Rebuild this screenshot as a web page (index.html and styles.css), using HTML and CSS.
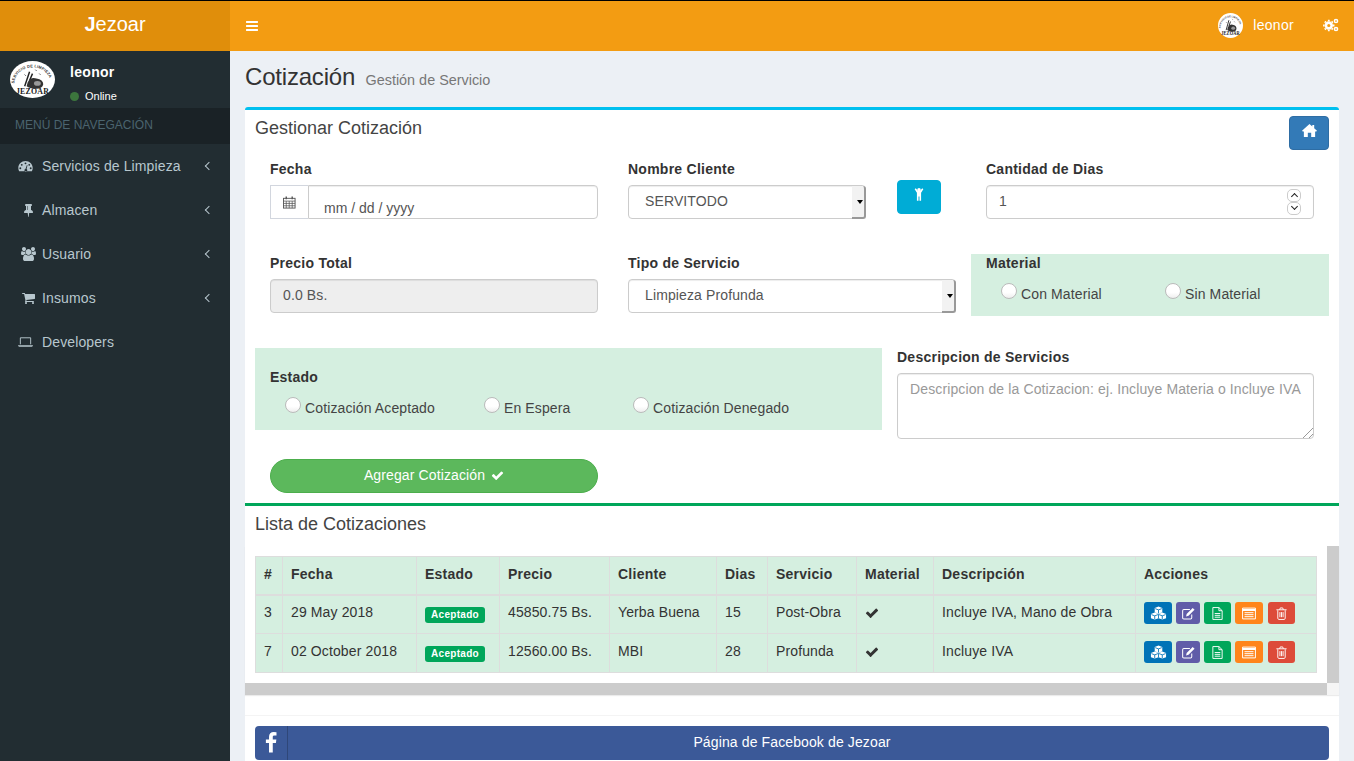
FILE: index.html
```html
<!DOCTYPE html>
<html lang="es">
<head>
  <meta charset="UTF-8" />
  <meta name="viewport" content="width=device-width, initial-scale=1.0" />
  <title>Cotización</title>
  <link rel="stylesheet" href="styles.css">
</head>
<body>
  <svg class="defs" width="0" height="0">
    <symbol id="logo-art" viewBox="0 0 92 76" preserveAspectRatio="none">
      <ellipse cx="46" cy="38" rx="46" ry="38" fill="#fff"/>
      <path d="M40 22 L30 52 M46 26 L40 40" stroke="#222" stroke-width="3" fill="none"/>
      <path d="M36 44 q6-12 18-8 q14 2 14 12 q-2 10-16 9 q-12 0-18-5z" fill="#333"/>
      <ellipse cx="56" cy="46" rx="7" ry="5" fill="#999"/>
      <path d="M30 28l2 2M52 18l2 2M60 26l2 2" stroke="#222" stroke-width="2"/>
    </symbol>
    <symbol id="i-check" viewBox="0 0 1792 1792"><path d="M1671 566q0 40-28 68l-724 724-136 136q-28 28-68 28t-68-28l-136-136-362-362q-28-28-28-68t28-68l136-136q28-28 68-28t68 28l294 295 656-657q28-28 68-28t68 28l136 136q28 28 28 68z"/></symbol>
    <symbol id="i-dash" viewBox="0 0 24 18"><path fill-rule="evenodd" d="M12 1C5.600 1 .5 6 .5 12.200c0 1.900.5 3.700 1.300 5.300h20.400c.8-1.600 1.300-3.400 1.300-5.300C23.500 6 18.400 1 12 1zM12 3.200a1.500 1.500 0 1 1 0 3 1.500 1.500 0 0 1 0-3zM6 5.600a1.500 1.500 0 1 1 0 3 1.500 1.500 0 0 1 0-3zM18 5.600a1.500 1.500 0 1 1 0 3 1.500 1.500 0 0 1 0-3zM3.700 11a1.500 1.500 0 1 1 0 3 1.500 1.500 0 0 1 0-3zM20.300 11a1.500 1.500 0 1 1 0 3 1.500 1.500 0 0 1 0-3zM14.300 7.500l.9.300-1.500 6a2.300 2.300 0 1 1-1.800-.2z"/></symbol>
    <symbol id="i-pin" viewBox="320 0 1152 1792"><path d="M800 864v-448q0-14-9-23t-23-9-23 9-9 23v448q0 14 9 23t23 9 23-9 9-23zm672 352q0 26-19 45t-45 19h-429l-51 483q-2 12-10.500 20.500t-20.500 8.500h-1q-27 0-32-27l-76-485h-404q-26 0-45-19t-19-45q0-123 78.500-221.500t177.500-98.500v-512q-52 0-90-38t-38-90 38-90 90-38h640q52 0 90 38t38 90-38 90-90 38v512q99 0 177.500 98.500t78.500 221.500z"/></symbol>
    <symbol id="i-users" viewBox="0 0 1920 1792"><path d="M593 896q-162 5-265 128h-134q-82 0-138-40.500t-56-118.500q0-353 124-353 6 0 43.500 21t97.500 42.500 119 21.500q67 0 133-23-5 37-5 66 0 139 81 256zm1071 637q0 120-73 189.500t-194 69.500h-874q-121 0-194-69.500t-73-189.500q0-53 3.500-103.500t14-109 26.500-108.500 43-97.500 62-81 85.500-53.500 111.500-20q10 0 43 21.500t73 48 107 48 135 21.500 135-21.500 107-48 73-48 43-21.500q61 0 111.500 20t85.500 53.500 62 81 43 97.500 26.500 108.500 14 109 3.500 103.500zm-1024-1277q0 106-75 181t-181 75-181-75-75-181 75-181 181-75 181 75 75 181zm704 384q0 159-112.500 271.500t-271.500 112.500-271.500-112.500-112.500-271.500 112.500-271.500 271.500-112.500 271.500 112.500 112.500 271.500zm576 225q0 78-56 118.500t-138 40.500h-134q-103-123-265-128 81-117 81-256 0-29-5-66 66 23 133 23 59 0 119-21.500t97.500-42.500 43.500-21q124 0 124 353zm-128-609q0 106-75 181t-181 75-181-75-75-181 75-181 181-75 181 75 75 181z"/></symbol>
    <symbol id="i-cart" viewBox="0 0 1792 1792"><path d="M704 1536q0 52-38 90t-90 38-90-38-38-90 38-90 90-38 90 38 38 90zm896 0q0 52-38 90t-90 38-90-38-38-90 38-90 90-38 90 38 38 90zm128-1088v512q0 24-16.500 42.500t-40.500 21.500l-1044 122q13 60 13 70 0 16-24 64h920q26 0 45 19t19 45-19 45-45 19h-1024q-26 0-45-19t-19-45q0-11 8-31.500t16-36 21.500-40 15.500-29.500l-177-823h-204q-26 0-45-19t-19-45 19-45 45-19h256q16 0 28.500 6.500t19.500 15.500 13 24.500 8 26 5.500 29.500 4.500 26h1201q26 0 45 19t19 45z"/></symbol>
    <symbol id="i-laptop" viewBox="0 0 16 12"><path d="M2.500 8.500V1.500h11v7" fill="none" stroke="#b8c7ce" stroke-width="1"/><path d="M0 9.500h16c0 .9-.6 1.500-1.400 1.500H1.400C.6 11 0 10.400 0 9.500z"/></symbol>
    <symbol id="i-gears" viewBox="0 0 16 14"><g fill="none" stroke="currentColor"><circle cx="5.800" cy="7.500" r="2.900" stroke-width="2.600"/><path d="M5.800 1.800v1.500M5.800 11.700v1.500M.1 7.500h1.500M10 7.500h1.500M1.800 3.500l1 1M8.800 10.500l1 1M9.800 3.500l-1 1M2.800 10.500l-1 1" stroke-width="1.800"/><circle cx="13" cy="3" r="1.600" stroke-width="1.500"/><circle cx="13" cy="11" r="1.600" stroke-width="1.500"/></g></symbol>
    <symbol id="i-home" viewBox="0 0 16 16"><path d="M8 1l3 2.700V2h2v3.500L16 8.200l-.8.800H14v6H9.800v-4.500H6.200V15H2V9H.8L0 8.200z"/></symbol>
    <symbol id="i-fb" viewBox="0 0 1792 1792"><path d="M1343 12v264h-157q-86 0-116 36t-30 108v189h293l-39 296h-254v759h-306v-759h-255v-296h255v-218q0-186 104-288.500t277-102.500q147 0 228 12z"/></symbol>
    <symbol id="i-cal" viewBox="0 0 14 14"><g fill="none" stroke="currentColor"><rect x=".5" y="2.500" width="12.500" height="10.500"/><path d="M.5 5.500h12.500M.5 8h12.500M.5 10.500h12.500M3.500 5.500V13M6.700 5.500V13M9.900 5.500V13" stroke-width=".8"/><path d="M3.500 .5v3M9.900 .5v3" stroke-width="1.500"/></g></symbol>
    <symbol id="i-child" viewBox="0 0 12 16"><circle cx="6" cy="2.800" r="2.100"/><path d="M.8 2.200l1.300-1 2.600 3h2.600l2.600-3 1.300 1L8.500 6.400V16H6.600V11H5.400V16H3.500V6.400z"/></symbol>
    <symbol id="i-cubes" viewBox="0 0 18 14"><path d="M9 .2l4 1.500v4.600L9 7.800 5 6.300V1.700zM5 6.600l4 1.500 4-1.500 4 1.500v4.500L13 14l-4-1.400L5 14l-4-1.400V8.100z"/><path d="M5.500 2.400L9 3.700l3.500-1.300M9 3.700v3.600M1.500 8.700L5 10l3.500-1.300M5 10v3.500M9.500 8.700L13 10l3.500-1.300M13 10v3.500M9 8.200v4.400" fill="none" stroke="#0073b7" stroke-width=".9"/></symbol>
    <symbol id="i-edit" viewBox="0 0 14 13"><path d="M10.500 7.500V11c0 .8-.5 1.300-1.300 1.300H2C1.200 12.300.7 11.800.7 11V3.500c0-.8.5-1.300 1.300-1.300h6.500" fill="none" stroke="currentColor" stroke-width="1.100"/><path d="M11.500 .5l2 2-6.500 6.500-2.600.6.600-2.600z"/></symbol>
    <symbol id="i-file" viewBox="0 0 12 14"><path d="M1 .6h6.500L11 4v9.400H1z M7.500 .6V4H11" fill="none" stroke="currentColor"/><path d="M3 7h6M3 9h6M3 11h6" stroke="currentColor"/></symbol>
    <symbol id="i-list" viewBox="0 0 14 12"><path d="M.6 .6h12.800v10.800H.6z" fill="none" stroke="currentColor"/><path d="M.6 2.500h12.800" stroke="currentColor" stroke-width="2"/><path d="M2.500 5.200h9M2.500 7.200h9M2.500 9.200h9" stroke="currentColor"/></symbol>
    <symbol id="i-trash" viewBox="0 0 12 14"><path d="M2 3.500V12c0 .8.500 1.400 1.100 1.400h5.800c.6 0 1.100-.6 1.100-1.400V3.500M.5 3h11M4 3l.7-2h2.600L8 3M4.300 5.500v5.500M6 5.500v5.500M7.700 5.500v5.500" fill="none" stroke="currentColor"/></symbol>
  </svg>

  <div class="app">
    <aside class="sidebar">
      <div class="brand"><b>J</b>ezoar</div>
      <div class="user-panel">
        <svg class="user-logo" viewBox="0 0 92 76" preserveAspectRatio="none">
          <use href="#logo-art"/>
          <path id="arc-side" d="M9 46 A37 33 0 0 1 83 46" fill="none"/>
          <text class="logo-arc-text"><textPath href="#arc-side">SERVICIO DE LIMPIEZA</textPath></text>
          <text class="logo-name" x="46" y="67" text-anchor="middle">JEZOAR</text>
        </svg>
        <div>
          <p class="user-name">leonor</p>
          <p class="user-status"><span class="dot"></span>Online</p>
        </div>
      </div>
      <div class="menu-header">MENÚ DE NAVEGACIÓN</div>
      <ul class="menu">
        <li><svg class="menu-icon"><use href="#i-dash"/></svg><span>Servicios de Limpieza</span><i class="angle"></i></li>
        <li><svg class="menu-icon menu-icon-in"><use href="#i-pin"/></svg><span>Almacen</span><i class="angle"></i></li>
        <li><svg class="menu-icon menu-icon-in"><use href="#i-users"/></svg><span>Usuario</span><i class="angle"></i></li>
        <li><svg class="menu-icon menu-icon-in"><use href="#i-cart"/></svg><span>Insumos</span><i class="angle"></i></li>
        <li><svg class="menu-icon"><use href="#i-laptop"/></svg><span>Developers</span></li>
      </ul>
    </aside>

    <div class="main">
      <header class="topbar">
        <svg class="bars" viewBox="0 0 1792 1792"><path d="M1664 1344v128q0 26-19 45t-45 19h-1408q-26 0-45-19t-19-45v-128q0-26 19-45t45-19h1408q26 0 45 19t19 45zm0-512v128q0 26-19 45t-45 19h-1408q-26 0-45-19t-19-45v-128q0-26 19-45t45-19h1408q26 0 45 19t19 45zm0-512v128q0 26-19 45t-45 19h-1408q-26 0-45-19t-19-45v-128q0-26 19-45t45-19h1408q26 0 45 19t19 45z"/></svg>
        <div class="topbar-right">
          <svg class="top-logo" viewBox="0 0 92 76" preserveAspectRatio="none">
            <use href="#logo-art"/>
            <path id="arc-top" d="M9 46 A37 33 0 0 1 83 46" fill="none"/>
            <text class="logo-arc-text"><textPath href="#arc-top">SERVICIO DE LIMPIEZA</textPath></text>
            <text class="logo-name" x="46" y="67" text-anchor="middle">JEZOAR</text>
          </svg>
          <span class="top-user">leonor</span>
          <svg class="gears"><use href="#i-gears"/></svg>
        </div>
      </header>

      <div class="content-header">
        <h1>Cotización <small>Gestión de Servicio</small></h1>
      </div>

      <section class="box box-info">
        <div class="box-header">
          <h3>Gestionar Cotización</h3>
          <button class="btn btn-home"><svg><use href="#i-home"/></svg></button>
        </div>

        <form>
          <div class="form-row row-one">
            <div class="field">
              <label>Fecha</label>
              <div class="input-group">
                <span class="addon"><svg><use href="#i-cal"/></svg></span>
                <input class="control date" type="text" value="mm / dd / yyyy">
              </div>
            </div>
            <div class="field field-client">
              <div class="client-select">
                <label>Nombre Cliente</label>
                <div class="select-wrap">
                  <select class="control"><option>SERVITODO</option></select>
                </div>
              </div>
              <button type="button" class="btn btn-child"><svg><use href="#i-child"/></svg></button>
            </div>
            <div class="field">
              <label>Cantidad de Dias</label>
              <div class="number-wrap">
                <input class="control" type="text" value="1">
                <span class="spin"><i class="up"></i><i class="down"></i></span>
              </div>
            </div>
          </div>

          <div class="form-row row-two">
            <div class="field">
              <label>Precio Total</label>
              <input class="control" type="text" value="0.0 Bs." disabled>
            </div>
            <div class="field">
              <label>Tipo de Servicio</label>
              <div class="select-wrap">
                <select class="control"><option>Limpieza Profunda</option></select>
              </div>
            </div>
            <div class="field green material">
              <label>Material</label>
              <div class="radios radios-material">
                <label class="radio"><input type="radio" name="material">Con Material</label>
                <label class="radio"><input type="radio" name="material">Sin Material</label>
              </div>
            </div>
          </div>

          <div class="form-row row-three">
            <div class="field green estado">
              <label>Estado</label>
              <div class="radios radios-estado">
                <label class="radio"><input type="radio" name="estado">Cotización Aceptado</label>
                <label class="radio"><input type="radio" name="estado">En Espera</label>
                <label class="radio"><input type="radio" name="estado">Cotización Denegado</label>
              </div>
            </div>
            <div class="field">
              <label>Descripcion de Servicios</label>
              <div class="area-wrap">
                <textarea class="control" placeholder="Descripcion de la Cotizacion: ej. Incluye Materia o Incluye IVA"></textarea>
              </div>
            </div>
          </div>

          <div class="submit-row">
            <button type="button" class="btn btn-add">Agregar Cotización <svg><use href="#i-check"/></svg></button>
          </div>
        </form>
      </section>

      <section class="box box-success">
        <div class="box-header list-header">
          <h3>Lista de Cotizaciones</h3>
        </div>
        <div class="scroll-area">
          <div class="scroll-inner">
            <table>
              <thead>
                <tr>
                  <th class="c-id">#</th>
                  <th class="c-date">Fecha</th>
                  <th class="c-state">Estado</th>
                  <th class="c-price">Precio</th>
                  <th class="c-client">Cliente</th>
                  <th class="c-days">Dias</th>
                  <th class="c-service">Servicio</th>
                  <th class="c-material">Material</th>
                  <th class="c-desc">Descripción</th>
                  <th class="c-actions">Acciones</th>
                </tr>
              </thead>
              <tbody>
                <tr>
                  <td>3</td>
                  <td>29 May 2018</td>
                  <td><span class="badge">Aceptado</span></td>
                  <td>45850.75 Bs.</td>
                  <td>Yerba Buena</td>
                  <td>15</td>
                  <td>Post-Obra</td>
                  <td><svg class="tick"><use href="#i-check"/></svg></td>
                  <td>Incluye IVA, Mano de Obra</td>
                  <td class="actions">
                    <button class="act act-blue"><svg><use href="#i-cubes"/></svg></button>
                    <button class="act act-purple"><svg><use href="#i-edit"/></svg></button>
                    <button class="act act-green"><svg><use href="#i-file"/></svg></button>
                    <button class="act act-orange"><svg><use href="#i-list"/></svg></button>
                    <button class="act act-red"><svg><use href="#i-trash"/></svg></button>
                  </td>
                </tr>
                <tr>
                  <td>7</td>
                  <td>02 October 2018</td>
                  <td><span class="badge">Aceptado</span></td>
                  <td>12560.00 Bs.</td>
                  <td>MBI</td>
                  <td>28</td>
                  <td>Profunda</td>
                  <td><svg class="tick"><use href="#i-check"/></svg></td>
                  <td>Incluye IVA</td>
                  <td class="actions">
                    <button class="act act-blue"><svg><use href="#i-cubes"/></svg></button>
                    <button class="act act-purple"><svg><use href="#i-edit"/></svg></button>
                    <button class="act act-green"><svg><use href="#i-file"/></svg></button>
                    <button class="act act-orange"><svg><use href="#i-list"/></svg></button>
                    <button class="act act-red"><svg><use href="#i-trash"/></svg></button>
                  </td>
                </tr>
              </tbody>
            </table>
          </div>
          <div class="bar-v"></div>
          <div class="bar-h"></div>
          <div class="bar-corner"></div>
        </div>
        <div class="box-footer">
          <a class="btn-facebook" href="#"><span class="fb-icon"><svg><use href="#i-fb"/></svg></span>Página de Facebook de Jezoar</a>
        </div>
      </section>
    </div>
  </div>
</body>
</html>
```
FILE: styles.css
```css
* {
  box-sizing: border-box;
}

html, body {
  height: 100%;
  overflow: hidden;
}

body {
  margin: 0;
  font-family: "Liberation Sans", Arial, sans-serif;
  font-size: 14px;
  line-height: 20px;
  letter-spacing: 0.12px;
  color: #333;
  background-color: #ecf0f5;
}

.defs {
  position: absolute;
}

.logo-arc-text {
  font-family: "Liberation Sans", sans-serif;
  font-size: 8px;
  font-weight: bold;
  letter-spacing: 0.4px;
  fill: #333;
}

.logo-name {
  font-family: "Liberation Serif", serif;
  font-size: 16px;
  font-weight: bold;
  letter-spacing: 0.5px;
  fill: #222;
}

.app {
  display: flex;
  height: 761px;
  border-top: 1px solid #000;
}

/* sidebar */
.sidebar {
  width: 230px;
  flex: none;
  background-color: #222d32;
}

.brand {
  height: 50px;
  background-color: #e08e0b;
  color: #fff;
  font-size: 20px;
  line-height: 47px;
  letter-spacing: 0;
  text-align: center;
}

.user-panel {
  display: flex;
  height: 57px;
  padding: 10px 10px 0;
  gap: 15px;
}

.user-logo {
  width: 45px;
  height: 37px;
}

.user-name {
  margin: 1px 0 0;
  color: #fff;
  font-weight: bold;
  letter-spacing: 0.3px;
}

.user-status {
  display: flex;
  align-items: center;
  margin: 7px 0 0;
  font-size: 11px;
  line-height: 14px;
  letter-spacing: 0;
  color: #fff;
}

.dot {
  width: 9px;
  height: 9px;
  margin-right: 6px;
  border-radius: 50%;
  background-color: #3c763d;
}

.menu-header {
  height: 36px;
  padding: 7px 15px;
  background-color: #1a2226;
  color: #4b646f;
  font-size: 12px;
  letter-spacing: 0;
}

.menu {
  margin: 0;
  padding: 0;
  list-style: none;
}

.menu li {
  display: flex;
  align-items: center;
  height: 44px;
  padding: 0 18px;
  color: #b8c7ce;
}

.menu-icon {
  width: 15px;
  height: 14px;
  margin-right: 9px;
  fill: #b8c7ce;
}

.menu-icon-in {
  margin-left: 3px;
  margin-right: 6px;
}

.angle {
  width: 6px;
  height: 6px;
  margin-left: auto;
  border-left: 1px solid #b8c7ce;
  border-bottom: 1px solid #b8c7ce;
  transform: rotate(45deg);
}

/* top bar */
.main {
  flex: 1;
  min-width: 0;
}

.topbar {
  display: flex;
  align-items: center;
  justify-content: space-between;
  height: 50px;
  background-color: #f39c12;
  padding: 0 15px;
  color: #fff;
}

.bars {
  width: 14px;
  height: 14px;
  fill: #fff;
}

.topbar-right {
  display: flex;
  align-items: center;
  margin-bottom: 2px;
}

.top-logo {
  width: 25px;
  height: 25px;
}

.top-user {
  margin-left: 10px;
  letter-spacing: 0.3px;
}

.gears {
  width: 16px;
  height: 14px;
  margin-left: 29px;
  color: #fff;
}

.content-header {
  height: 56px;
  padding: 12px 15px 0;
}

.content-header h1 {
  margin: 0;
  font-size: 24px;
  font-weight: normal;
  line-height: 28px;
  letter-spacing: -0.2px;
}

.content-header small {
  margin-left: 4px;
  font-size: 14.400px;
  letter-spacing: 0;
  color: #777;
}

/* boxes */
.box {
  width: 1094px;
  margin-left: 15px;
  background-color: #fff;
}

.box-info {
  height: 396px;
  border-top: 3px solid #00c0ef;
  border-radius: 3px 3px 0 0;
}

.box-success {
  border-top: 3px solid #00a65a;
}

.box-header {
  display: flex;
  justify-content: space-between;
  height: 49px;
  padding: 6px 10px 0;
}

.box-header h3 {
  margin: 0;
  padding-top: 2px;
  font-size: 18px;
  font-weight: normal;
  letter-spacing: 0;
  color: #444;
}

.list-header {
  height: 40px;
  padding-top: 6px;
}

.btn {
  border: 1px solid transparent;
  border-radius: 4px;
  padding: 0;
  font-family: inherit;
  color: #fff;
}

.btn svg {
  fill: #fff;
}

.btn-home {
  width: 40px;
  height: 34px;
  background-color: #337ab7;
  border-color: #2e6da4;
}

.btn-home svg {
  width: 15px;
  height: 15px;
  margin-bottom: 3px;
}

/* form */
.form-row {
  display: grid;
  grid-template-columns: repeat(3, 358px);
  padding: 0 10px;
}

.row-one {
  height: 94px;
}

.row-two {
  height: 95px;
}

.row-three {
  grid-template-columns: 627px 447px;
  height: 111px;
}

.field {
  padding: 0 15px;
}

.field label {
  display: block;
  height: 20px;
  margin-bottom: 6px;
  font-weight: bold;
  letter-spacing: 0.25px;
}

.field .radio {
  display: flex;
  align-items: center;
  height: auto;
  margin: 0;
  font-weight: normal;
  letter-spacing: 0.12px;
  color: #444;
}

.control {
  display: block;
  width: 100%;
  height: 34px;
  padding: 5px 12px 7px;
  border: 1px solid #ccc;
  border-radius: 4px;
  background-color: #fff;
  color: #555;
  font-family: inherit;
  font-size: 14px;
  letter-spacing: inherit;
  box-shadow: inset 0 1px 1px rgba(0,0,0,.075);
}

input.control:disabled {
  background-color: #eee;
}

.input-group {
  display: flex;
}

.addon {
  display: flex;
  justify-content: center;
  width: 38px;
  height: 34px;
  flex: none;
  padding-top: 10px;
  border: 1px solid #d2d6de;
  border-right: 0;
  color: #555;
}

.addon svg {
  width: 13px;
  height: 13px;
}

.date {
  padding: 11px 15px 0;
  border-radius: 0 4px 4px 0;
  border-color: #ccc;
  letter-spacing: 0;
}

.field-client {
  display: flex;
  gap: 31px;
}

.client-select {
  width: 238px;
}

.btn-child {
  width: 44px;
  height: 34px;
  margin-top: 21px;
  background-color: #00acd6;
  border-color: #00acd6;
}

.btn-child svg {
  width: 10px;
  height: 14px;
  margin-bottom: 3px;
}

.select-wrap {
  position: relative;
}

.select-wrap select {
  appearance: none;
  padding-left: 16px;
}

.select-wrap::after {
  content: "";
  position: absolute;
  top: 1px;
  right: 0;
  bottom: 0;
  width: 12px;
  background-color: #f2f2f2;
  border-right: 2px solid #999;
  border-bottom: 2px solid #999;
  border-radius: 0 3px 3px 0;
}

.select-wrap::before {
  content: "";
  position: absolute;
  z-index: 1;
  top: 15px;
  right: 3px;
  border: 3px solid transparent;
  border-top: 4px solid #000;
  border-bottom: 0;
}

.number-wrap {
  position: relative;
}

.spin {
  position: absolute;
  top: 4px;
  right: 13px;
  display: flex;
  flex-direction: column;
}

.spin i {
  position: relative;
  width: 14px;
  height: 13px;
  border: 1px solid #ccc;
  border-radius: 5px;
}

.spin i::after {
  content: "";
  position: absolute;
  left: 4px;
  width: 4px;
  height: 4px;
  border-left: 1px solid #222;
  border-top: 1px solid #222;
}

.spin .up::after {
  top: 4px;
  transform: rotate(45deg);
}

.spin .down::after {
  top: 1px;
  transform: rotate(225deg);
}

.green {
  background-color: #d5efe0;
}

.material {
  height: 62px;
  margin-top: 1px;
}

.material > label {
  margin: -1px 0 11px;
}

.estado {
  height: 82px;
  padding-top: 19px;
}

.estado > label {
  margin-bottom: 11px;
}

.radios {
  display: grid;
  padding-left: 15px;
}

.radios-material {
  grid-template-columns: 164px auto;
}

.radios-estado {
  grid-template-columns: 199px 149px auto;
}

.radio input {
  appearance: none;
  width: 16px;
  height: 16px;
  margin: -6px 4px 0 0;
  flex: none;
  border: 1px solid #bbb;
  border-radius: 50%;
  background: linear-gradient(#fff 60%, #eee);
}

.area-wrap {
  position: relative;
}

.area-wrap::after {
  content: "";
  position: absolute;
  right: 1px;
  bottom: 1px;
  width: 13px;
  height: 13px;
  background: repeating-linear-gradient(135deg, transparent 0, transparent 3px, #999 3px, #999 4px);
  clip-path: polygon(100% 0, 100% 100%, 0 100%);
}

textarea.control {
  height: 66px;
  padding: 5px 12px;
  line-height: 20px;
  resize: none;
}

textarea.control::placeholder {
  color: #999;
}

.row-three .field:last-child label {
  margin: -1px 0 6px;
}

.submit-row {
  padding: 0 25px;
}

.btn-add {
  display: flex;
  align-items: center;
  justify-content: center;
  gap: 6px;
  width: 328px;
  height: 34px;
  padding-bottom: 2px;
  border-color: #4cae4c;
  border-radius: 17px;
  background-color: #5cb85c;
  font-size: 14px;
  letter-spacing: inherit;
}

.btn-add svg {
  width: 13px;
  height: 13px;
}

/* table */
.scroll-area {
  display: grid;
  grid-template-columns: 1082px 12px;
  grid-template-rows: 137px 12px;
  box-shadow: 0 1px 1px rgba(0,0,0,.08);
}

.scroll-inner {
  padding: 10px;
}

.bar-v, .bar-h {
  background-color: #ccc;
}

.bar-corner {
  background-color: #f5f5f5;
}

table {
  width: 1061px;
  table-layout: fixed;
  border-collapse: collapse;
  background-color: #d5efe0;
}

th, td {
  height: 39px;
  padding: 0 8px 5px;
  border: 1px solid #ddd;
  text-align: left;
  vertical-align: middle;
}

th {
  height: 38px;
  padding-bottom: 2px;
  border-bottom-width: 2px;
  letter-spacing: 0.25px;
}

.c-id { width: 27px; }
.c-date { width: 134px; }
.c-state { width: 83px; }
.c-price { width: 110px; }
.c-client { width: 107px; }
.c-days { width: 51px; }
.c-service { width: 89px; }
.c-material { width: 77px; }
.c-desc { width: 202px; }
.c-actions { width: 181px; }

.badge {
  display: block;
  width: 60px;
  height: 16px;
  margin-top: 6px;
  border-radius: 3px;
  background-color: #00a65a;
  color: #fff;
  font-size: 10px;
  font-weight: bold;
  line-height: 15px;
  letter-spacing: 0.3px;
  text-align: center;
}

.tick {
  width: 14px;
  height: 14px;
  fill: #333;
  vertical-align: -3px;
}

.actions {
  padding-bottom: 3px;
  white-space: nowrap;
  font-size: 0;
}

.act {
  width: 27px;
  height: 22px;
  margin-right: 4px;
  padding: 0;
  border: 0;
  border-radius: 3px;
  color: #fff;
  vertical-align: middle;
}

.act svg {
  width: 13px;
  height: 13px;
  fill: currentColor;
  vertical-align: middle;
}

.act-blue { width: 28px; background-color: #0073b7; }
.act-purple { width: 24px; background-color: #605ca8; }
.act-green { background-color: #00a65a; }
.act-orange { width: 28px; background-color: #ff851b; }
.act-red { background-color: #dd4b39; }

.act-blue svg { width: 17px; height: 14px; }
.act-orange svg { width: 14px; fill: none; }
.act-green svg, .act-red svg { fill: none; }

/* footer */
.box-footer {
  margin-top: 20px;
  padding: 10px;
  border-top: 1px solid #f4f4f4;
}

.btn-facebook {
  position: relative;
  display: block;
  height: 34px;
  border-radius: 4px;
  background-color: #3b5998;
  color: #fff;
  line-height: 32px;
  text-align: center;
  text-decoration: none;
}

.fb-icon {
  position: absolute;
  top: 0;
  left: 0;
  display: flex;
  align-items: center;
  justify-content: center;
  width: 33px;
  height: 34px;
  border-right: 1px solid rgba(0,0,0,.2);
}

.fb-icon svg {
  width: 22px;
  height: 22px;
  fill: #fff;
}
```
